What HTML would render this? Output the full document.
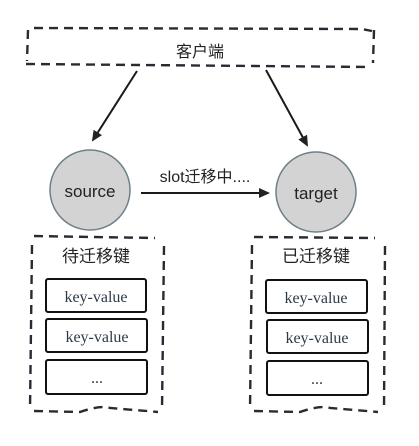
<!DOCTYPE html>
<html><head><meta charset="utf-8"><style>
body{margin:0;width:419px;height:441px;background:#fff;overflow:hidden;font-family:"Liberation Sans","Noto Sans CJK SC",sans-serif}
</style></head><body>
<svg width="419" height="441" xmlns="http://www.w3.org/2000/svg">
<defs><marker id="ah" markerWidth="11" markerHeight="10" refX="9" refY="5" orient="auto" markerUnits="userSpaceOnUse"><path d="M0,0 L11,5 L0,10 z" fill="#222"/></marker></defs>
<g fill="none" stroke="#2a2a35" stroke-width="2.4" stroke-dasharray="9,6">
<path d="M34,28 L362,29 L372,31"/>
<path d="M28,30 L27,61"/>
<path d="M374,30 L373,63"/>
<path d="M26,64 L370,67"/>
<path d="M34,236 L155,238"/>
<path d="M32,245 L30,410"/>
<path d="M164,246 L162,410"/>
<path d="M34,411 L80,412 Q100,405 110,408 L158,412"/>
<path d="M254,237 L375,238"/>
<path d="M252,245 L250,410"/>
<path d="M385,246 L384,410"/>
<path d="M254,411 L300,412 Q320,405 330,408 L378,412"/>
</g>
<g stroke="#1a1a1a" stroke-width="2" fill="none">
<line x1="137" y1="71" x2="93" y2="140" marker-end="url(#ah)"/>
<line x1="266" y1="70" x2="307" y2="145" marker-end="url(#ah)"/>
<line x1="141" y1="193" x2="268" y2="193" marker-end="url(#ah)"/>
</g>
<circle cx="90" cy="190" r="40" fill="#d3d3d3" stroke="#6e8088" stroke-width="1.5"/>
<circle cx="316" cy="192" r="40" fill="#d3d3d3" stroke="#6e8088" stroke-width="1.5"/>
<g fill="#fff" stroke="#111" stroke-width="2">
<rect x="46" y="279" width="100" height="33" rx="2"/>
<rect x="46" y="319" width="101" height="33" rx="2"/>
<rect x="46" y="360" width="101" height="34" rx="2"/>
<rect x="266" y="280" width="101" height="33" rx="2"/>
<rect x="267" y="320" width="101" height="33" rx="2"/>
<rect x="267" y="361" width="101" height="34" rx="2"/>
</g>
<g font-size="16" fill="#222" text-anchor="middle">
<text x="200" y="57">客户端</text>
<text x="96" y="262" font-size="17">待迁移键</text>
<text x="316" y="262" font-size="17">已迁移键</text>
<text x="90" y="197" font-size="17">source</text>
<text x="316" y="199" font-size="17">target</text>
<text x="205" y="182">slot迁移中....</text>
</g>
<g font-family="Liberation Serif,serif" font-size="16" fill="#2c3a48" text-anchor="middle">
<text x="96" y="302">key-value</text>
<text x="97" y="342">key-value</text>
<text x="97" y="383">...</text>
<text x="316" y="303">key-value</text>
<text x="317" y="343">key-value</text>
<text x="317" y="384">...</text>
</g>
</svg>
</body></html>
